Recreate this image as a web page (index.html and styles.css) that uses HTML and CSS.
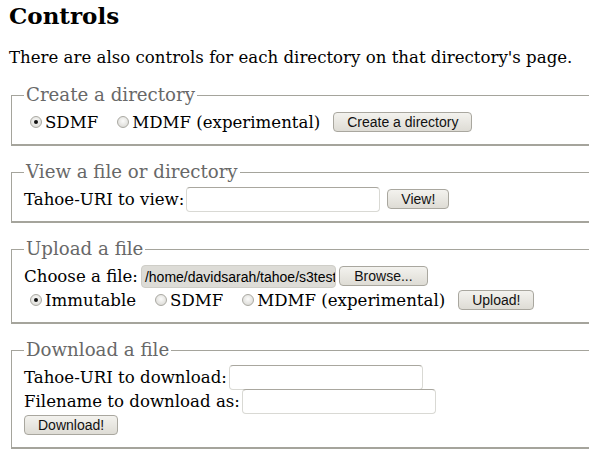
FILE: index.html
```html
<!DOCTYPE html>
<html lang="en">
<head>
    <meta charset="UTF-8">
    <title>Controls</title>
    <link rel="stylesheet" href="styles.css">
</head>
<body>

    <h1>Controls</h1>

    <p class="note">There are also controls for each directory on that directory's page.</p>

    <!-- Create a directory -->
    <fieldset>
        <legend>Create a directory</legend>
        <div class="row">
            <label class="radio"><input type="radio" name="mkdir" checked>SDMF</label>
            <label class="radio"><input type="radio" name="mkdir">MDMF (experimental)</label>
            <button type="button" class="btn">Create a directory</button>
        </div>
    </fieldset>

    <!-- View a file or directory -->
    <fieldset>
        <legend>View a file or directory</legend>
        <div class="row">
            <label>Tahoe-URI to view:</label>
            <input type="text" class="text-input">
            <button type="button" class="btn">View!</button>
        </div>
    </fieldset>

    <!-- Upload a file -->
    <fieldset>
        <legend>Upload a file</legend>
        <div class="row">
            <label>Choose a file:</label>
            <span class="file-path">/home/davidsarah/tahoe/s3test</span><button type="button" class="btn browse">Browse...</button>
        </div>
        <div class="row">
            <label class="radio"><input type="radio" name="upload" checked>Immutable</label>
            <label class="radio"><input type="radio" name="upload">SDMF</label>
            <label class="radio"><input type="radio" name="upload">MDMF (experimental)</label>
            <button type="button" class="btn">Upload!</button>
        </div>
    </fieldset>

    <!-- Download a file -->
    <fieldset>
        <legend>Download a file</legend>
        <div class="row">
            <label>Tahoe-URI to download:</label>
            <input type="text" class="text-input">
        </div>
        <div class="row">
            <label>Filename to download as:</label>
            <input type="text" class="text-input">
        </div>
        <div class="row">
            <button type="button" class="btn">Download!</button>
        </div>
    </fieldset>

</body>
</html>
```

FILE: styles.css
```css
html {
    overflow: hidden;
}

body {
    margin: 2px 8px 8px 8px;
    font-family: 'DejaVu Serif', serif;
    font-size: 16.6px;
    color: #000;
    background-color: #fff;
}

h1 {
    font-size: 23px;
    font-weight: bold;
    margin: 0 0 0 1px;
    line-height: 27px;
}

.note {
    margin: 19px 0 0 1px;
    line-height: 20px;
}

fieldset {
    margin: 16px -60px 0 3px;
    padding: 4px 12px 10px 12px;
    border: 1px solid #a5a49c;
    border-width: 1px 1px 2px 1px;
}

fieldset + fieldset {
    margin-top: 15px;
}

legend {
    font-size: 18.2px;
    color: #686868;
    padding: 0 2px;
    margin-left: 0;
    line-height: 22px;
}

.row {
    display: flex;
    align-items: center;
    height: 24px;
    white-space: nowrap;
}

.radio {
    display: inline-flex;
    align-items: center;
    margin-left: 6px;
    margin-right: 13px;
}

.radio input {
    appearance: none;
    width: 12px;
    height: 12px;
    margin: 0 3px 0 0;
    border: 1px solid #aaa9a2;
    border-radius: 50%;
    background: radial-gradient(circle at 50% 40%, #fbfbfa, #d5d4cf);
    position: relative;
}

.radio input:checked::after {
    content: '';
    position: absolute;
    left: 3px;
    top: 3px;
    width: 4px;
    height: 4px;
    border-radius: 50%;
    background-color: #111;
}

.btn {
    font-family: 'Liberation Sans', Arial, sans-serif;
    font-size: 14px;
    color: #111;
    height: 20px;
    padding: 0 13px;
    border: 1px solid #a9a79f;
    border-radius: 4px;
    background: linear-gradient(#f3f2ee, #dedcd5);
    line-height: 18px;
}

.text-input {
    width: 194px;
    height: 25px;
    margin: 0 7px 0 2px;
    border: 1px solid #d9d9d4;
    border-top-color: #a9a79f;
    border-radius: 4px;
    padding: 0 4px;
    box-sizing: border-box;
}

.file-path {
    font-family: 'Liberation Sans', Arial, sans-serif;
    font-size: 14px;
    display: inline-block;
    width: 195px;
    height: 23px;
    line-height: 23px;
    margin-left: 3px;
    padding-left: 3px;
    box-sizing: border-box;
    overflow: hidden;
    background-color: #dddcd7;
    border: 1px solid #cfcec8;
    border-radius: 4px;
}

.browse {
    margin-left: 3px;
    width: 89px;
}
```
